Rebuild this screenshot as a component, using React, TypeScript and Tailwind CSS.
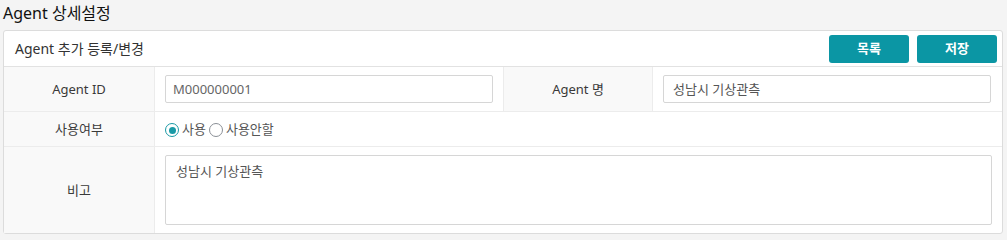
import React from "react";

const font = { fontFamily: '"Noto Sans", "Noto Sans CJK KR", sans-serif' };

function Label({ children }: { children: React.ReactNode }) {
  return (
    <div className="flex items-center justify-center bg-[#f9f9f9] pt-[2px] text-[13px] text-[#3a3a3a]">
      {children}
    </div>
  );
}

function Radio({ checked, label }: { checked?: boolean; label: string }) {
  return (
    <label className="flex items-center gap-[3px]">
      <span
        className={`flex h-[14px] w-[14px] items-center justify-center rounded-full border ${
          checked ? "border-[#1a9aa6]" : "border-[#8a8f96]"
        }`}
      >
        {checked && <span className="h-[7px] w-[7px] rounded-full bg-[#1a9aa6]" />}
      </span>
      <span>{label}</span>
    </label>
  );
}

export default function App() {
  return (
    <div className="h-[240px] w-[1007px] bg-[#f4f4f4] px-[3px] pt-[3px] text-[#333]" style={font}>
      <h1 className="text-[16px] leading-[20px] text-[#111]">Agent 상세설정</h1>

      <div className="mt-[7px] w-[1000px] rounded-[3px] border border-[#dcdcdc] bg-white">
        <div className="flex h-[36px] items-center justify-between border-b border-[#e2e2e2] pl-[11px] pr-[5px]">
          <p className="text-[14px] text-[#333]">Agent 추가 등록/변경</p>
          <div className="flex gap-[8px]">
            <button className="h-[28px] w-[80px] rounded-[3px] bg-[#0b96a4] text-[13px] font-bold text-white">
              목록
            </button>
            <button className="h-[28px] w-[80px] rounded-[3px] bg-[#0b96a4] text-[13px] font-bold text-white">
              저장
            </button>
          </div>
        </div>

        <div className="grid h-[45px] grid-cols-[150px_349px_149px_1fr] border-b border-[#ececec]">
          <Label>Agent ID</Label>
          <div className="flex items-center border-l border-[#ececec] pl-[10px]">
            <div className="flex h-[28px] w-[328px] items-center rounded-[2px] border border-[#d6d6d6] px-[7px] pt-[1px] text-[13px] text-[#666]">
              M000000001
            </div>
          </div>
          <div className="border-l border-[#ececec]">
            <div className="flex h-full items-center justify-center bg-[#f9f9f9] pt-[2px] text-[13px] text-[#3a3a3a]">
              Agent 명
            </div>
          </div>
          <div className="flex items-center border-l border-[#ececec] pl-[10px] pr-[11px]">
            <div className="flex h-[28px] w-full items-center rounded-[2px] border border-[#d6d6d6] px-[9px] pt-[1px] text-[13px] text-[#555]">
              성남시 기상관측
            </div>
          </div>
        </div>

        <div className="grid h-[35px] grid-cols-[150px_1fr] border-b border-[#ececec]">
          <Label>사용여부</Label>
          <div className="flex items-center gap-[3px] border-l border-[#ececec] pl-[10px] pt-[2px] text-[13px] text-[#555]">
            <Radio checked label="사용" />
            <Radio label="사용안할" />
          </div>
        </div>

        <div className="grid h-[86px] grid-cols-[150px_1fr]">
          <Label>비고</Label>
          <div className="flex items-center border-l border-[#ececec] pl-[10px] pr-[10px]">
            <div className="h-[70px] w-full rounded-[2px] border border-[#d6d6d6] px-[10px] pt-[6px] text-[13px] text-[#555]">
              성남시 기상관측
            </div>
          </div>
        </div>
      </div>
    </div>
  );
}
